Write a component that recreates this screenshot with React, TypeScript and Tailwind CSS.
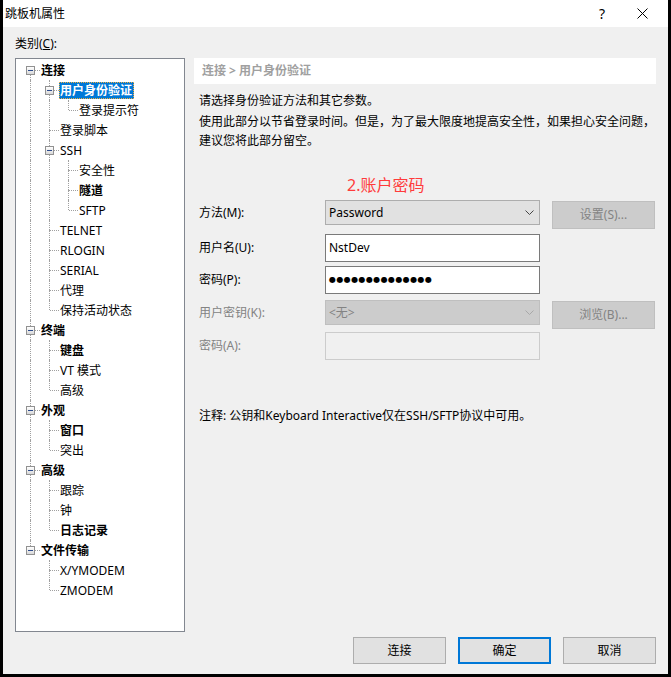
type TreeNode = {
  label: string;
  bold?: boolean;
  selected?: boolean;
  children?: TreeNode[];
};

type Row = {
  node: TreeNode;
  guides: boolean[];
  first: boolean;
  last: boolean;
};

const tree: TreeNode[] = [
  {
    label: "连接",
    bold: true,
    children: [
      { label: "用户身份验证", bold: true, selected: true, children: [{ label: "登录提示符" }] },
      { label: "登录脚本" },
      {
        label: "SSH",
        children: [{ label: "安全性" }, { label: "隧道", bold: true }, { label: "SFTP" }],
      },
      { label: "TELNET" },
      { label: "RLOGIN" },
      { label: "SERIAL" },
      { label: "代理" },
      { label: "保持活动状态" },
    ],
  },
  {
    label: "终端",
    bold: true,
    children: [{ label: "键盘", bold: true }, { label: "VT 模式" }, { label: "高级" }],
  },
  { label: "外观", bold: true, children: [{ label: "窗口", bold: true }, { label: "突出" }] },
  {
    label: "高级",
    bold: true,
    children: [{ label: "跟踪" }, { label: "钟" }, { label: "日志记录", bold: true }],
  },
  { label: "文件传输", bold: true, children: [{ label: "X/YMODEM" }, { label: "ZMODEM" }] },
];

function flatten(nodes: TreeNode[], depth: number, guides: boolean[], out: Row[]) {
  nodes.forEach((node, i) => {
    const last = i === nodes.length - 1;
    out.push({ node, guides, first: depth === 0 && i === 0, last });
    if (node.children) flatten(node.children, depth + 1, [...guides, !last], out);
  });
  return out;
}

const rows = flatten(tree, 0, [], []);

function TreeRow({ row }: { row: Row }) {
  const { node } = row;
  return (
    <div className="flex h-[20px] items-center pl-[5px]">
      {row.guides.map((g, k) => (
        <div key={k} className="relative h-full w-[19px] shrink-0">
          {g && <div className="absolute left-[9px] top-0 h-full border-l border-dotted border-[#a0a0a0]" />}
        </div>
      ))}
      <div className="relative h-full w-[19px] shrink-0">
        {!row.first && <div className="absolute left-[9px] top-0 h-[10px] border-l border-dotted border-[#a0a0a0]" />}
        {!row.last && <div className="absolute left-[9px] top-[10px] h-[10px] border-l border-dotted border-[#a0a0a0]" />}
        <div className="absolute left-[10px] top-[10px] w-[9px] border-t border-dotted border-[#a0a0a0]" />
        {node.children && (
          <div className="absolute left-[5px] top-[6px] flex h-[9px] w-[9px] items-center justify-center border border-[#919191] bg-gradient-to-b from-white to-[#d8d8d8]">
            <div className="h-[1px] w-[5px] bg-[#2b4a8c]" />
          </div>
        )}
      </div>
      <span
        className={
          node.selected
            ? "h-[17px] whitespace-nowrap bg-[#0078d7] pl-[1px] pr-[2px] font-bold leading-[17px] text-white outline-1 -outline-offset-1 outline-dotted outline-[#f0b040]"
            : node.bold
              ? "h-[17px] whitespace-nowrap pl-[1px] pr-[2px] font-bold leading-[17px]"
              : "h-[17px] whitespace-nowrap pl-[1px] pr-[2px] leading-[17px]"
        }
      >
        {node.label}
      </span>
    </div>
  );
}

function Chevron({ color }: { color: string }) {
  return (
    <svg width="9" height="6" viewBox="0 0 9 6" className="mr-[5px]">
      <polyline points="0.5,0.5 4.5,4.5 8.5,0.5" fill="none" stroke={color} strokeWidth="1" />
    </svg>
  );
}

export default function App() {
  return (
    <div className="flex h-[677px] w-[671px] bg-black pb-[3px] pl-[3px] pr-[5px] font-['Segoe_UI','Noto_Sans','Noto_Sans_CJK_SC',sans-serif] text-[12px] text-black">
      <div className="flex flex-1 flex-col bg-[#f0f0f0]">
        <div className="flex h-[27px] items-center bg-white">
          <span className="pl-[2px] leading-[16px]">跳板机属性</span>
          <div className="ml-auto flex h-full items-center">
            <span className="flex w-[40px] justify-center text-[14px]">?</span>
            <span className="flex w-[40px] justify-center">
              <svg width="11" height="11" viewBox="0 0 11 11">
                <path d="M0.5 0.5 L10.5 10.5 M10.5 0.5 L0.5 10.5" stroke="#000" strokeWidth="1" />
              </svg>
            </span>
            <span className="w-[6px]" />
          </div>
        </div>

        <div className="flex flex-1 flex-col px-[12px]">
          <div className="pt-[9px] leading-[16px]">
            类别(<span className="underline">C</span>):
          </div>

          <div className="mt-[6px] flex gap-[9px]">
            <div className="h-[574px] w-[170px] border border-[#828790] bg-white pt-[1px]">
              {rows.map((row, i) => (
                <TreeRow key={i} row={row} />
              ))}
            </div>

            <div className="flex w-[462px] flex-col">
              <div className="flex h-[26px] items-center bg-white pl-[8px] font-bold text-[#a0a0a0]">
                连接 &gt; 用户身份验证
              </div>
              <p className="mt-[8px] pl-[5px] leading-[18px]">请选择身份验证方法和其它参数。</p>
              <p className="mt-[2px] whitespace-nowrap pl-[5px] leading-[19px]">
                使用此部分以节省登录时间。但是，为了最大限度地提高安全性，如果担心安全问题，
                <br />
                建议您将此部分留空。
              </p>
              <p className="mt-[25px] pl-[153px] text-[16px] leading-[20px] text-[#ff3b3b]">2.账户密码</p>

              <div className="mt-[5px] flex items-start">
                <label className="flex h-[25px] w-[131px] items-center pl-[5px]">方法(M):</label>
                <div className="flex h-[25px] w-[215px] items-center justify-between border border-[#adadad] bg-[#e1e1e1] pl-[3px]">
                  <span>Password</span>
                  <Chevron color="#444" />
                </div>
                <button className="ml-[12px] mt-[1px] h-[28px] w-[103px] border border-[#bfbfbf] bg-[#cccccc] text-[#838383]">
                  设置(S)...
                </button>
              </div>

              <div className="mt-[5px] flex items-center">
                <label className="w-[131px] pl-[5px]">用户名(U):</label>
                <div className="flex h-[28px] w-[215px] items-center border border-[#7a7a7a] bg-white pl-[3px]">NstDev</div>
              </div>

              <div className="mt-[4px] flex items-center">
                <label className="w-[131px] pl-[5px]">密码(P):</label>
                <div className="flex h-[28px] w-[215px] items-center border border-[#7a7a7a] bg-white pl-[3px]">
                  <span className="font-['DejaVu_Sans'] text-[8px] tracking-[0.4px]">●●●●●●●●●●●●●●</span>
                </div>
              </div>

              <div className="mt-[6px] flex items-start">
                <label className="flex h-[25px] w-[131px] items-center pl-[5px] text-[#838383]">用户密钥(K):</label>
                <div className="flex h-[25px] w-[215px] items-center justify-between border border-[#bfbfbf] bg-[#cccccc] pl-[3px] text-[#838383]">
                  <span>&lt;无&gt;</span>
                  <Chevron color="#a8a8a8" />
                </div>
                <button className="ml-[12px] mt-[1px] h-[28px] w-[103px] border border-[#bfbfbf] bg-[#cccccc] text-[#838383]">
                  浏览(B)...
                </button>
              </div>

              <div className="mt-[3px] flex items-center">
                <label className="w-[131px] pl-[5px] text-[#838383]">密码(A):</label>
                <div className="h-[28px] w-[215px] border border-[#cccccc] bg-[#f0f0f0]" />
              </div>

              <p className="mt-[48px] pl-[5px] leading-[16px]">注释: 公钥和Keyboard Interactive仅在SSH/SFTP协议中可用。</p>
            </div>
          </div>

          <div className="mt-[5px] flex justify-end gap-[12px]">
            <button className="h-[27px] w-[93px] border border-[#adadad] bg-[#e1e1e1]">连接</button>
            <button className="h-[27px] w-[93px] border-2 border-[#0078d7] bg-[#e1e1e1]">确定</button>
            <button className="h-[27px] w-[93px] border border-[#adadad] bg-[#e1e1e1]">取消</button>
          </div>
        </div>
      </div>
    </div>
  );
}
